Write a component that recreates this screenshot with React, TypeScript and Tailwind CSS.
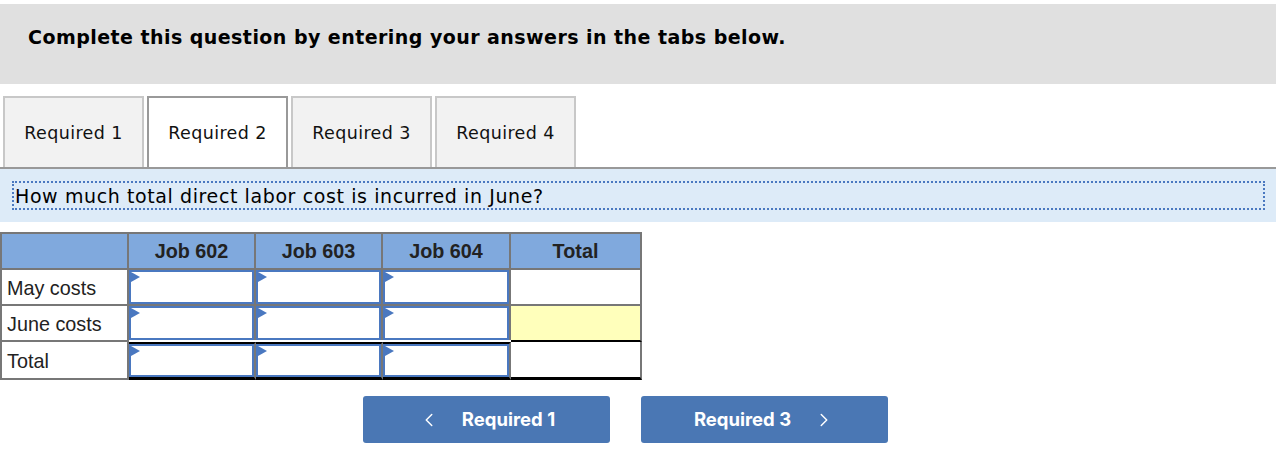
import React from "react";
import { ChevronLeft, ChevronRight } from "lucide-react";

const verdana = { fontFamily: '"DejaVu Sans", Verdana, sans-serif' };
const arial = { fontFamily: '"Liberation Sans", Arial, sans-serif' };

function InputCell() {
  return (
    <div className="relative h-full w-full bg-white border-2 border-[#4a78c0]">
      <div className="absolute left-0 top-0 h-0 w-0 border-y-[5px] border-y-transparent border-l-[9px] border-l-[#4a78c0]" />
    </div>
  );
}

export default function App() {
  const tabs = ["Required 1", "Required 2", "Required 3", "Required 4"];
  const rows = ["May costs", "June costs", "Total"];
  return (
    <div className="w-[1280px] h-[462px] bg-white relative">
      <div className="pt-1">
        <div className="w-[1276px] h-[80px] bg-[#e0e0e0] flex items-center pl-[28px] pb-[14px]">
          <div className="text-[19px] font-bold text-black tracking-[0.45px]" style={verdana}>
            Complete this question by entering your answers in the tabs below.
          </div>
        </div>
      </div>
      <div className="mt-[12px] w-[1276px] flex pl-[3px] gap-[3px] border-b-2 border-[#999]">
        {tabs.map((t, i) => (
          <div
            key={t}
            className={
              "w-[141px] h-[71px] flex items-center justify-center pt-[2px] text-[17.5px] tracking-[0.4px] text-[#111] border-2 border-b-0 " +
              (i === 1 ? "bg-white border-[#999]" : "bg-[#f2f2f2] border-[#c8c8c8]")
            }
            style={verdana}
          >
            {t}
          </div>
        ))}
      </div>
      <div className="w-[1276px] h-[53px] bg-[#ddebf8] pt-[12px] pl-[12px] pr-[11px]">
        <div
          className="h-[29px] border-2 border-dotted border-[#4a78c0] flex items-center pl-[1px] pt-[2px] text-[19px] tracking-[0.6px] text-black"
          style={verdana}
        >
          How much total direct labor cost is incurred in June?
        </div>
      </div>
      <div className="mt-[10px] ml-0 w-[642px] border-l-2 border-t-2 border-[#777]" style={arial}>
        <div className="grid grid-cols-[127px_127px_127px_128px_131px]">
          <div className="h-[36px] bg-[#80a9dd] border-r-2 border-b-2 border-[#777]" />
          {["Job 602", "Job 603", "Job 604", "Total"].map((h) => (
            <div
              key={h}
              className="h-[36px] bg-[#80a9dd] border-r-2 border-b-2 border-[#777] flex items-center justify-center pt-[1px] text-[19.8px] font-bold text-[#222]"
            >
              {h}
            </div>
          ))}
          {rows.map((r, ri) => (
            <React.Fragment key={r}>
              <div
                className={
                  "border-r-2 border-b-2 border-[#777] flex items-center pl-[5px] pt-[3px] text-[19.8px] text-[#222] " +
                  (ri === 2 ? "h-[38px]" : "h-[36px]")
                }
              >
                {r}
              </div>
              {[0, 1, 2].map((c) => (
                <div
                  key={c}
                  className={
                    "border-r-2 border-[#777] " +
                    (ri === 2
                      ? "h-[38px] border-t-2 border-t-black border-b-[3px] border-b-black"
                      : ri === 1
                      ? "h-[34px] border-b-0"
                      : "h-[36px] border-b-2")
                  }
                >
                  <InputCell />
                </div>
              ))}
              <div
                className={
                  "border-r-2 border-[#777] " +
                  (ri === 1
                    ? "h-[36px] bg-[#ffffbb] border-b-2 border-b-black"
                    : ri === 2
                    ? "h-[38px] bg-white border-b-[3px] border-b-black"
                    : "h-[36px] bg-white border-b-2")
                }
              />
            </React.Fragment>
          ))}
        </div>
      </div>
      <div className="mt-[16px] flex pl-[363px] gap-[31px]" style={{ fontFamily: "Inter, Roboto, sans-serif" }}>
        <div className="w-[247px] h-[47px] bg-[#4a77b4] rounded-[3px] flex items-center justify-center gap-[22px] text-white text-[18.5px] font-bold">
          <ChevronLeft size={22} strokeWidth={1.6} />
          <span>Required 1</span>
        </div>
        <div className="w-[247px] h-[47px] bg-[#4a77b4] rounded-[3px] flex items-center justify-center gap-[22px] text-white text-[18.5px] font-bold">
          <span>Required 3</span>
          <ChevronRight size={22} strokeWidth={1.6} />
        </div>
      </div>
    </div>
  );
}
